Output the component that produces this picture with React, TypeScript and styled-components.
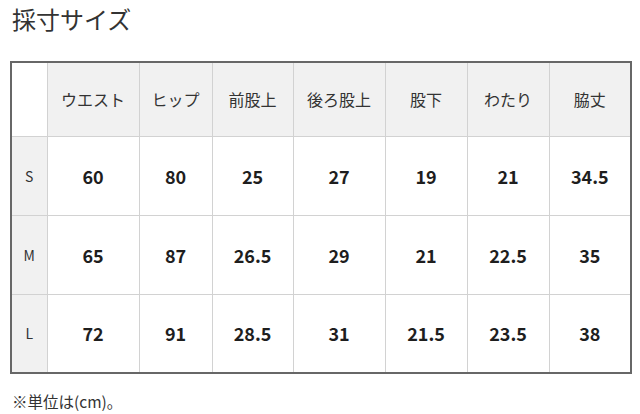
import React from "react";
import styled, { createGlobalStyle } from "styled-components";

const GlobalStyle = createGlobalStyle`
  body {
    margin: 0;
    background: #ffffff;
    font-family: "Noto Sans CJK JP", "Noto Sans", sans-serif;
    color: #222222;
  }
`;

const Columns = ["ウエスト", "ヒップ", "前股上", "後ろ股上", "股下", "わたり", "脇丈"];
const ColumnWidths = [36, 92, 73, 81, 92, 82, 82, 82];

const Sizes = [
  { size: "S", values: ["60", "80", "25", "27", "19", "21", "34.5"] },
  { size: "M", values: ["65", "87", "26.5", "29", "21", "22.5", "35"] },
  { size: "L", values: ["72", "91", "28.5", "31", "21.5", "23.5", "38"] },
];

const App = () => {
  return (
    <Page>
      <GlobalStyle />
      <Title>採寸サイズ</Title>
      <SizeTable>
        <colgroup>
          {ColumnWidths.map((w, i) => (
            <col key={i} style={{ width: w }} />
          ))}
        </colgroup>
        <thead>
          <HeadRow>
            <Corner />
            {Columns.map((name) => (
              <HeadCell key={name}>{name}</HeadCell>
            ))}
          </HeadRow>
        </thead>
        <tbody>
          {Sizes.map((row) => (
            <BodyRow key={row.size}>
              <SizeCell>{row.size}</SizeCell>
              {row.values.map((v, i) => (
                <ValueCell key={i}>{v}</ValueCell>
              ))}
            </BodyRow>
          ))}
        </tbody>
      </SizeTable>
      <Note>※単位は(cm)。</Note>
    </Page>
  );
};

const Page = styled.div`
  width: 640px;
  height: 414px;
  padding: 0 10px;
  box-sizing: border-box;
  overflow: hidden;
`;

const Title = styled.h2`
  margin: 0;
  padding: 2px 0 0 2px;
  font-size: 24px;
  line-height: 34px;
  font-weight: 400;
  color: #333333;
`;

const SizeTable = styled.table`
  margin-top: 25px;
  width: 620px;
  table-layout: fixed;
  border-collapse: collapse;
  border: 2px solid #676767;
`;

const HeadRow = styled.tr`
  height: 74px;
`;

const BodyRow = styled.tr`
  height: 79px;
`;

const Cell = styled.td`
  padding: 0;
  border: 1px solid #d2d2d2;
  text-align: center;
  vertical-align: middle;
`;

const Corner = styled(Cell).attrs({ as: "th" })`
  background: #ffffff;
`;

const HeadCell = styled(Cell).attrs({ as: "th" })`
  background: #f1f1f1;
  font-size: 16px;
  font-weight: 400;
  color: #333333;
`;

const SizeCell = styled(Cell)`
  background: #f1f1f1;
  font-size: 14px;
  color: #333333;
`;

const ValueCell = styled(Cell)`
  font-size: 18px;
  font-weight: 700;
  color: #1e1e1e;
`;

const Note = styled.p`
  margin: 16px 0 0 2px;
  font-size: 15.5px;
  line-height: 22px;
  color: #333333;
`;

export default App;
